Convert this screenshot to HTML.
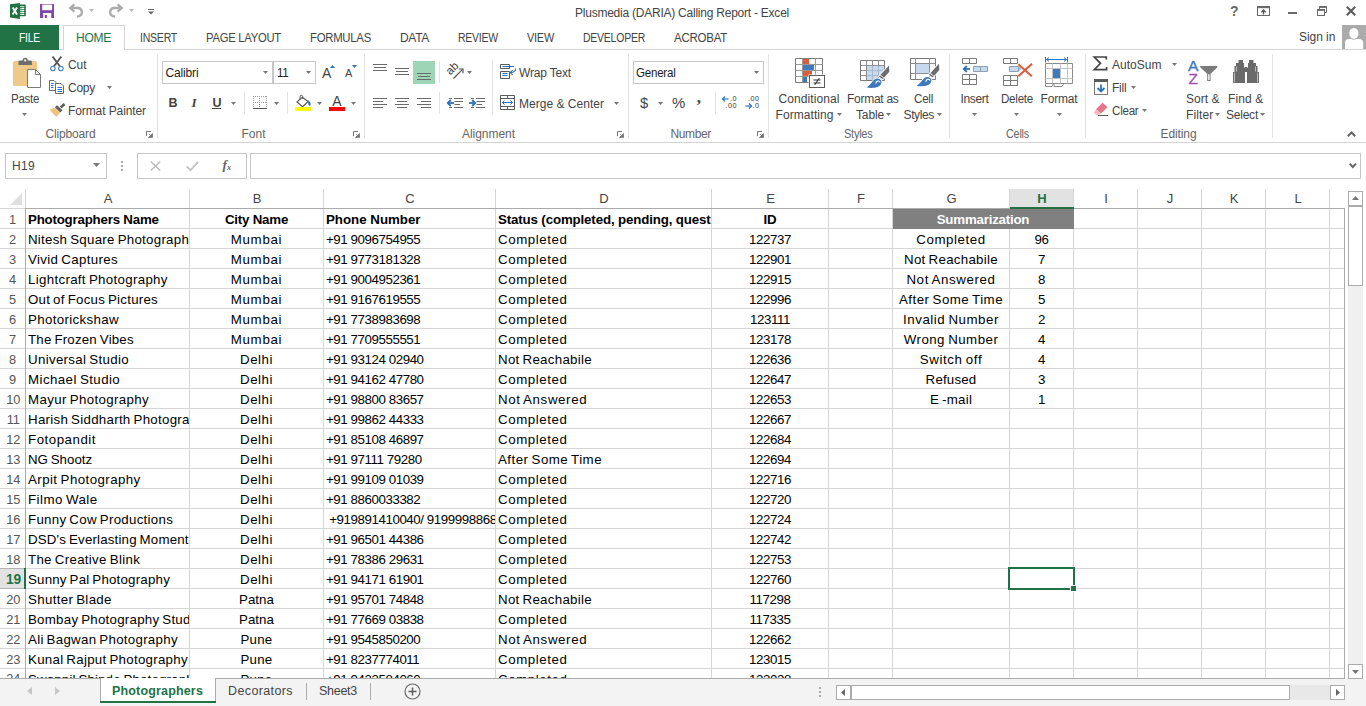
<!DOCTYPE html>
<html lang="en"><head><meta charset="utf-8"><title>Plusmedia (DARIA) Calling Report - Excel</title>
<style>
html,body{margin:0;padding:0;}
body{width:1366px;height:706px;position:relative;overflow:hidden;background:#fff;font-family:"Liberation Sans",sans-serif;color:#444;}
.t{position:absolute;white-space:pre;}
.a{position:absolute;}
.hl{position:absolute;height:1px;}
.vl{position:absolute;width:1px;}
svg{position:absolute;overflow:visible;}
.clip{position:absolute;overflow:hidden;}
.clip .t{top:0;}

</style></head>
<body>
<!-- title bar -->
<svg style="left:10px;top:2px" width="17" height="18" viewBox="0 0 17 18">
<path d="M9 2.500h5.800a1 1 0 0 1 1 1v9.800a1 1 0 0 1 -1 1H9z" fill="#217346"/>
<path d="M11.200 4.200h3v1.100h-3zM11.200 6.100h3v1.100h-3zM11.200 8.100h3v1.100h-3zM11.200 10.100h3v1.100h-3zM11.200 12h3v1.100h-3z" fill="#fff"/>
<path d="M10 4.200h0.700v1.100H10zM10 6.100h0.700v1.100H10zM10 8.100h0.700v1.100H10zM10 10.100h0.700v1.100H10zM10 12h0.700v1.100H10z" fill="#fff"/>
<path d="M0 2.200L9.900 0.900v16L0 15.600z" fill="#217346"/>
<path d="M2.700 5.600l4.300 7M7 5.600l-4.300 7" stroke="#fff" stroke-width="1.900" fill="none"/>
</svg>
<svg style="left:40px;top:4px" width="14" height="14" viewBox="0 0 14 14">
<path d="M0 0h14v14H0z" fill="#8348a6"/>
<rect x="2.200" y="0.600" width="9.900" height="5.600" fill="#fff"/>
<rect x="3.200" y="9" width="8" height="5" fill="#fff"/>
<rect x="4.800" y="11" width="2.100" height="3" fill="#8348a6"/>
</svg>
<svg style="left:68px;top:3px" width="16" height="15" viewBox="0 0 16 15">
<path d="M2.500 5H10a4.200 4.200 0 0 1 0.500 8.300l-1.500 0.200" stroke="#ababab" stroke-width="2.300" fill="none"/>
<path d="M6.300 1.300L2.300 5l4 3.700" stroke="#ababab" stroke-width="2.300" fill="none"/>
</svg>
<svg style="left:89px;top:9px" width="5" height="3" viewBox="0 0 5 3"><path d="M0 0h5L2.500 3z" fill="#b8b8b8"/></svg>
<svg style="left:108px;top:3px" width="16" height="15" viewBox="0 0 16 15">
<path d="M13.500 5H6a4.200 4.200 0 0 0 -0.500 8.300l1.500 0.200" stroke="#ababab" stroke-width="2.300" fill="none"/>
<path d="M9.700 1.300L13.700 5l-4 3.700" stroke="#ababab" stroke-width="2.300" fill="none"/>
</svg>
<svg style="left:129px;top:9px" width="5" height="3" viewBox="0 0 5 3"><path d="M0 0h5L2.500 3z" fill="#b8b8b8"/></svg>
<svg style="left:148px;top:9px" width="6" height="6" viewBox="0 0 6 6"><path d="M0 0.500h6" stroke="#666" stroke-width="1"/><path d="M0 2.500h6L3 5.500z" fill="#666"/></svg>
<span class="t" style="top:5px;font-size:12px;line-height:16px;color:#444;letter-spacing:-0.235px;left:682px;transform:translateX(-50%);">Plusmedia (DARIA) Calling Report - Excel</span>
<span class="t" style="top:2.4px;font-size:14px;line-height:18px;color:#666;font-weight:700;left:1234.3px;transform:translateX(-50%);">?</span>
<svg style="left:1257px;top:6px" width="13" height="10" viewBox="0 0 13 10">
<rect x="0.500" y="0.500" width="12" height="9" fill="none" stroke="#6a6a6a"/><path d="M0 1.500h13" stroke="#6a6a6a" stroke-width="1.400"/>
<path d="M6.500 4v4.500M4.300 6.200L6.500 4l2.200 2.200" stroke="#555" stroke-width="1.300" fill="none"/></svg>
<div class="a" style="left:1288px;top:12px;width:9px;height:2px;background:#6a6a6a"></div>
<svg style="left:1317px;top:6px" width="11" height="10" viewBox="0 0 11 10">
<path d="M2.500 3V0.500h7v6H8" fill="none" stroke="#6a6a6a"/><path d="M2 1.200h8" stroke="#6a6a6a" stroke-width="1.400"/>
<rect x="0.500" y="3.500" width="7" height="6" fill="none" stroke="#6a6a6a"/><path d="M0 4.200h8" stroke="#6a6a6a" stroke-width="1.400"/></svg>
<svg style="left:1346px;top:6px" width="10" height="10" viewBox="0 0 10 10"><path d="M0.800 0.800l8.400 8.400M9.200 0.800l-8.400 8.400" stroke="#5e5e5e" stroke-width="2.200" fill="none"/></svg>
<!-- ribbon tabs -->
<div class="hl" style="left:0;top:49px;width:1366px;background:#d4d4d4"></div>
<div class="a" style="left:0;top:25px;width:59px;height:25px;background:#217346"></div>
<div class="a" style="left:63px;top:25px;width:60px;height:24px;background:#fff;border:1px solid #d4d4d4;border-bottom:none;box-sizing:content-box"></div>
<span class="t" style="top:29.5px;font-size:12px;line-height:16px;color:#fff;letter-spacing:-0.250px;left:19px;transform:scaleX(0.8626);transform-origin:0 50%;">FILE</span>
<span class="t" style="top:29.5px;font-size:12px;line-height:16px;color:#217346;letter-spacing:-0.250px;left:76px;">HOME</span>
<span class="t" style="top:29.5px;font-size:12px;line-height:16px;color:#444;letter-spacing:-0.250px;left:140px;transform:scaleX(0.8748);transform-origin:0 50%;">INSERT</span>
<span class="t" style="top:29.5px;font-size:12px;line-height:16px;color:#444;letter-spacing:-0.250px;left:206px;transform:scaleX(0.9355);transform-origin:0 50%;">PAGE LAYOUT</span>
<span class="t" style="top:29.5px;font-size:12px;line-height:16px;color:#444;letter-spacing:-0.250px;left:310px;transform:scaleX(0.9430);transform-origin:0 50%;">FORMULAS</span>
<span class="t" style="top:29.5px;font-size:12px;line-height:16px;color:#444;letter-spacing:-0.309px;left:400px;">DATA</span>
<span class="t" style="top:29.5px;font-size:12px;line-height:16px;color:#444;letter-spacing:-0.250px;left:458px;transform:scaleX(0.8725);transform-origin:0 50%;">REVIEW</span>
<span class="t" style="top:29.5px;font-size:12px;line-height:16px;color:#444;letter-spacing:-0.250px;left:527px;transform:scaleX(0.9100);transform-origin:0 50%;">VIEW</span>
<span class="t" style="top:29.5px;font-size:12px;line-height:16px;color:#444;letter-spacing:-0.250px;left:583px;transform:scaleX(0.8719);transform-origin:0 50%;">DEVELOPER</span>
<span class="t" style="top:29.5px;font-size:12px;line-height:16px;color:#444;letter-spacing:-0.250px;left:674px;transform:scaleX(0.9571);transform-origin:0 50%;">ACROBAT</span>
<span class="t" style="top:28.7px;font-size:12px;line-height:16px;color:#444;letter-spacing:-0.058px;left:1299px;">Sign in</span>
<svg style="left:1342px;top:25px" width="24" height="24" viewBox="0 0 24 24"><rect width="24" height="24" fill="#ababab"/>
<path d="M3 24v-6a4 4 0 0 1 4-4h10.200a4 4 0 0 1 4 4v6z" fill="#fff"/><ellipse cx="11.900" cy="8.500" rx="5.400" ry="6.200" fill="#ababab"/><ellipse cx="11.900" cy="8.400" rx="4.600" ry="5.400" fill="#fff"/></svg>
<!-- formula bar -->
<div class="hl" style="left:0;top:142px;width:1366px;background:#d4d4d4"></div>
<div class="a" style="left:5px;top:153px;width:100px;height:24px;border:1px solid #c6c6c6"></div>
<span class="t" style="top:158px;font-size:12px;line-height:16px;color:#444;letter-spacing:0.328px;left:12px;">H19</span>
<svg style="left:93px;top:163px" width="7" height="4" viewBox="0 0 7 4"><path d="M0 0h7L3.5 4z" fill="#777"/></svg>
<div class="a" style="left:121px;top:161px;width:2px;height:2px;background:#aaa"></div><div class="a" style="left:121px;top:165px;width:2px;height:2px;background:#aaa"></div><div class="a" style="left:121px;top:169px;width:2px;height:2px;background:#aaa"></div>
<div class="a" style="left:137px;top:153px;width:108px;height:24px;border:1px solid #c6c6c6"></div>
<svg style="left:150px;top:161px" width="11" height="10" viewBox="0 0 11 10"><path d="M0.8 0.5l9.4 9M10.2 0.5l-9.4 9" stroke="#b8b8b8" stroke-width="1.3" fill="none"/></svg>
<svg style="left:186px;top:161px" width="13" height="10" viewBox="0 0 13 10"><path d="M0.8 5.5l3.7 3.7L12.2 0.8" stroke="#c4c4c4" stroke-width="1.8" fill="none"/></svg>
<span class="t" style="top:156.25px;font-size:13.5px;line-height:17.5px;color:#666;font-weight:700;left:222.5px;font-family:'Liberation Serif',serif;font-style:italic;">f</span>
<span class="t" style="top:161.25px;font-size:8.5px;line-height:12.5px;color:#666;font-weight:700;left:227px;font-family:'Liberation Serif',serif;font-style:italic;">x</span>
<div class="a" style="left:250px;top:153px;width:1109px;height:24px;border:1px solid #c6c6c6"></div>
<svg style="left:1348.5px;top:162.5px" width="8" height="6" viewBox="0 0 8 6"><path d="M0.700 0.800L3.800 4L6.900 0.800" stroke="#666" stroke-width="2" fill="none"/></svg>
<!-- ribbon -->
<svg style="left:12px;top:57px" width="30" height="32" viewBox="0 0 30 32"><rect x="1" y="4" width="24" height="25" rx="1.500" fill="#efc987"/>
<path d="M6.500 8V4.500a1 1 0 0 1 1-1h3a2.700 2.700 0 0 1 5.400 0h3a1 1 0 0 1 1 1V8z" fill="#6d6d6d"/><circle cx="13.200" cy="3.400" r="1.100" fill="#fff"/>
<path d="M15.500 12.500h8l5 5v13h-13z" fill="#fff" stroke="#7a7a7a"/><path d="M23.500 12.500v5h5" fill="none" stroke="#7a7a7a"/></svg>
<span class="t" style="top:91px;font-size:12px;line-height:16px;color:#444;letter-spacing:-0.250px;left:11px;transform:scaleX(0.9512);transform-origin:0 50%;">Paste</span>
<svg style="left:22px;top:113px" width="5" height="3" viewBox="0 0 5 3"><path d="M0 0h5L2.5 3z" fill="#777"/></svg>
<svg style="left:50px;top:56px" width="15" height="16" viewBox="0 0 15 16"><path d="M2.500 0.500l7.300 9.800M11.300 0.500l-7.300 9.800" stroke="#555" stroke-width="1.900" fill="none"/>
<circle cx="2.900" cy="12.500" r="2.200" fill="#fff" stroke="#3b7dc4" stroke-width="1.100"/><circle cx="10.900" cy="12.500" r="2.200" fill="#fff" stroke="#3b7dc4" stroke-width="1.100"/></svg>
<span class="t" style="top:57px;font-size:12px;line-height:16px;color:#444;letter-spacing:-0.062px;left:68px;">Cut</span>
<svg style="left:49px;top:80px" width="16" height="15" viewBox="0 0 16 15"><path d="M0.500 0.500h4.500l2 2v8h-6.500z" fill="#fff" stroke="#6a6a6a"/><path d="M2 3.500h2.500M2 5.500h2.500M2 7.500h2.500" stroke="#2f71b8"/>
<path d="M6.500 3.500h5.500l2.500 2.500v7.500h-8z" fill="#fff" stroke="#6a6a6a"/><path d="M8.500 7.500h4.500M8.500 9.500h4.500M8.500 11.500h4.500" stroke="#2f71b8"/></svg>
<span class="t" style="top:80px;font-size:12px;line-height:16px;color:#444;letter-spacing:-0.254px;left:68px;">Copy</span>
<svg style="left:106.5px;top:86px" width="5" height="3" viewBox="0 0 5 3"><path d="M0 0h5L2.5 3z" fill="#777"/></svg>
<svg style="left:49px;top:102px" width="17" height="16" viewBox="0 0 17 16"><path d="M0.600 8L5.600 5.500l5.400 5L7.400 15z" fill="#f0c27b"/>
<path d="M5.900 5.200l2.100-2 5.500 5-2.200 2.200z" fill="#5e5e5e"/><path d="M10.800 4.600l3.800-3.600 1.800 2-3.900 3.500z" fill="#5e5e5e"/></svg>
<span class="t" style="top:103px;font-size:12px;line-height:16px;color:#444;letter-spacing:-0.097px;left:68px;">Format Painter</span>
<span class="t" style="top:126px;font-size:12px;line-height:16px;color:#666;letter-spacing:-0.153px;left:45.5px;">Clipboard</span>
<svg style="left:146px;top:131px" width="7" height="7" viewBox="0 0 7 7"><path d="M0.5 5V0.5H5" fill="none" stroke="#777"/><path d="M6.5 2.5v4h-4zM6 6L3 3" fill="#777" stroke="#777" stroke-width="0.8"/></svg>
<div class="vl" style="left:157px;top:54px;height:84px;background:#e2e2e2"></div>
<div class="a" style="left:162px;top:61px;width:109px;height:21px;border:1px solid #c6c6c6;background:#fff"></div>
<div class="a" style="left:273px;top:61px;width:41px;height:21px;border:1px solid #c6c6c6;background:#fff"></div>
<span class="t" style="top:64.5px;font-size:12px;line-height:16px;color:#222;letter-spacing:-0.145px;left:165.5px;">Calibri</span>
<svg style="left:263px;top:71px" width="5" height="3" viewBox="0 0 5 3"><path d="M0 0h5L2.5 3z" fill="#777"/></svg>
<span class="t" style="top:64.5px;font-size:12px;line-height:16px;color:#222;letter-spacing:-0.250px;left:277px;transform:scaleX(0.9608);transform-origin:0 50%;">11</span>
<svg style="left:306px;top:71px" width="5" height="3" viewBox="0 0 5 3"><path d="M0 0h5L2.5 3z" fill="#777"/></svg>
<span class="t" style="top:63.5px;font-size:14px;line-height:18px;color:#444;left:322px;">A</span>
<svg style="left:330px;top:64.5px" width="5" height="3" viewBox="0 0 5 3"><path d="M0 3h5L2.500 0z" fill="#2f71b8"/></svg>
<span class="t" style="top:66.2px;font-size:11px;line-height:15px;color:#444;left:345px;">A</span>
<svg style="left:352px;top:65px" width="5" height="3" viewBox="0 0 5 3"><path d="M0 0h5L2.500 3z" fill="#2f71b8"/></svg>
<span class="t" style="top:94.95px;font-size:12.5px;line-height:16.5px;color:#444;font-weight:700;left:168.5px;">B</span>
<span class="t" style="top:93.7px;font-size:13px;line-height:17px;color:#444;font-weight:700;left:191.5px;font-family:'Liberation Serif',serif;font-style:italic;">I</span>
<span class="t" style="top:94.95px;font-size:12.5px;line-height:16.5px;color:#444;font-weight:700;left:212.5px;">U</span>
<div class="hl" style="left:212px;top:108px;width:9px;background:#444"></div>
<svg style="left:231px;top:102px" width="5" height="3" viewBox="0 0 5 3"><path d="M0 0h5L2.5 3z" fill="#777"/></svg>
<div class="vl" style="left:244px;top:92px;height:22px;background:#e2e2e2"></div>
<svg style="left:252px;top:95px" width="15" height="14" viewBox="0 0 15 14"><g shape-rendering="crispEdges"><path d="M1 1.500h14M1 7.500h14M1.500 1v12M7.500 1v12M14.500 1v12" fill="none" stroke="#9a9a9a" stroke-dasharray="1 1"/><path d="M1 13.500h14" stroke="#555"/></g></svg>
<svg style="left:274px;top:102px" width="5" height="3" viewBox="0 0 5 3"><path d="M0 0h5L2.5 3z" fill="#777"/></svg>
<div class="vl" style="left:287px;top:92px;height:22px;background:#e2e2e2"></div>
<svg style="left:295px;top:94px" width="17" height="17" viewBox="0 0 17 17"><path d="M7.300 3.200l5.800 4.300-5.500 5.200-5.600-4.700z" fill="#fff" stroke="#555" stroke-width="1.100"/><path d="M5 5.800V2.600a1.300 1.300 0 0 1 2.600 0v2.200" fill="none" stroke="#555"/>
<path d="M13.300 6c1.800 1.800 3.200 4 2 5.400-1.200 1-2.600-.4-2-5.400z" fill="#2f71b8"/><rect x="0" y="13" width="16" height="4" fill="#ffff00"/></svg>
<svg style="left:317px;top:102px" width="5" height="3" viewBox="0 0 5 3"><path d="M0 0h5L2.5 3z" fill="#777"/></svg>
<span class="t" style="top:92.3px;font-size:14px;line-height:18px;color:#444;left:332.3px;">A</span>
<div class="a" style="left:329px;top:107px;width:16px;height:4px;background:#ff0000"></div>
<svg style="left:351px;top:102px" width="5" height="3" viewBox="0 0 5 3"><path d="M0 0h5L2.5 3z" fill="#777"/></svg>
<span class="t" style="top:126px;font-size:12px;line-height:16px;color:#666;letter-spacing:-0.004px;left:241.5px;">Font</span>
<svg style="left:353px;top:131px" width="7" height="7" viewBox="0 0 7 7"><path d="M0.5 5V0.5H5" fill="none" stroke="#777"/><path d="M6.5 2.5v4h-4zM6 6L3 3" fill="#777" stroke="#777" stroke-width="0.8"/></svg>
<div class="vl" style="left:364px;top:54px;height:84px;background:#e2e2e2"></div>
<div class="a" style="left:413px;top:61px;width:22px;height:23px;background:#9fd5b7"></div>
<div class="hl" style="left:373px;top:64px;width:14px;background:#6a6a6a"></div><div class="hl" style="left:374px;top:67px;width:12px;background:#6a6a6a"></div><div class="hl" style="left:373px;top:70px;width:14px;background:#6a6a6a"></div>
<div class="hl" style="left:395px;top:68px;width:14px;background:#6a6a6a"></div><div class="hl" style="left:396px;top:71px;width:12px;background:#6a6a6a"></div><div class="hl" style="left:395px;top:74px;width:14px;background:#6a6a6a"></div>
<div class="hl" style="left:417px;top:73px;width:14px;background:#6a6a6a"></div><div class="hl" style="left:418px;top:76px;width:12px;background:#6a6a6a"></div><div class="hl" style="left:417px;top:79px;width:14px;background:#6a6a6a"></div>
<div class="vl" style="left:439px;top:61px;height:22px;background:#e2e2e2"></div>
<div class="vl" style="left:439px;top:92px;height:22px;background:#e2e2e2"></div>
<svg style="left:446px;top:63px" width="18" height="17" viewBox="0 0 18 17"><path d="M7.500 15.500L16.800 6.200" stroke="#555" stroke-width="1.200"/><path d="M12.800 6h4.200v4.200" fill="none" stroke="#555" stroke-width="1.200"/></svg>
<span class="t" style="top:61.25px;font-size:11.5px;line-height:15.5px;color:#3a3a3a;left:446px;transform:rotate(-45deg);transform-origin:50% 50%;">ab</span>
<svg style="left:467px;top:71px" width="5" height="3" viewBox="0 0 5 3"><path d="M0 0h5L2.5 3z" fill="#777"/></svg>
<div class="vl" style="left:492px;top:60px;height:55px;background:#e2e2e2"></div>
<svg style="left:500px;top:63px" width="17" height="17" viewBox="0 0 17 17"><path d="M0.500 1.500h9v4h-9zM0.500 8.500h9v7h-9z" fill="#fff" stroke="#5b5b5b"/>
<path d="M2.500 3.500h11.500M2.500 10.500h5M2.500 12.500h5" stroke="#2f71b8"/>
<path d="M15.500 5.500c0.300 2.500-1.500 4-4.800 4" fill="none" stroke="#2f71b8" stroke-width="1.100"/><path d="M12.700 7.200l-2.600 2.300 2.600 2.300" fill="none" stroke="#2f71b8" stroke-width="1.100"/></svg>
<span class="t" style="top:64.5px;font-size:12px;line-height:16px;color:#444;letter-spacing:-0.175px;left:519px;">Wrap Text</span>
<div class="hl" style="left:373px;top:98px;width:14px;background:#6a6a6a"></div><div class="hl" style="left:373px;top:101px;width:10px;background:#6a6a6a"></div><div class="hl" style="left:373px;top:104px;width:14px;background:#6a6a6a"></div><div class="hl" style="left:373px;top:107px;width:10px;background:#6a6a6a"></div>
<div class="hl" style="left:395px;top:98px;width:14px;background:#6a6a6a"></div><div class="hl" style="left:397px;top:101px;width:10px;background:#6a6a6a"></div><div class="hl" style="left:395px;top:104px;width:14px;background:#6a6a6a"></div><div class="hl" style="left:397px;top:107px;width:10px;background:#6a6a6a"></div>
<div class="hl" style="left:417px;top:98px;width:14px;background:#6a6a6a"></div><div class="hl" style="left:421px;top:101px;width:10px;background:#6a6a6a"></div><div class="hl" style="left:417px;top:104px;width:14px;background:#6a6a6a"></div><div class="hl" style="left:421px;top:107px;width:10px;background:#6a6a6a"></div>
<svg style="left:447px;top:97px" width="17" height="12" viewBox="0 0 17 12"><path d="M2 1.500h3M7 1.500h9M7.500 4.500h8.500M7.500 7.500h5.500M2 10.500h3M7 10.500h9" stroke="#6a6a6a"/><path d="M1 6h6" stroke="#2f71b8" stroke-width="1.800"/><path d="M3.800 3L0.800 6l3 3" fill="none" stroke="#2f71b8" stroke-width="1.800"/></svg>
<svg style="left:469px;top:97px" width="17" height="12" viewBox="0 0 17 12"><path d="M2 1.500h3M7 1.500h9M7.500 4.500h8.500M7.500 7.500h5.500M2 10.500h3M7 10.500h9" stroke="#6a6a6a"/><path d="M0 6h6" stroke="#2f71b8" stroke-width="1.800"/><path d="M3.200 3l3 3-3 3" fill="none" stroke="#2f71b8" stroke-width="1.800"/></svg>
<svg style="left:500px;top:95px" width="16" height="15" viewBox="0 0 16 15"><path d="M0.500 0.500h14v14h-14zM0.500 3.500h14M0.500 11.500h14M7.500 0.500v3M7.500 11.500v3" fill="none" stroke="#5b5b5b"/>
<path d="M2.500 7.500h10" stroke="#2f71b8"/><path d="M4.500 5.500l-2 2 2 2M10.500 5.500l2 2-2 2" fill="none" stroke="#2f71b8"/></svg>
<span class="t" style="top:95.5px;font-size:12px;line-height:16px;color:#444;letter-spacing:0.021px;left:519px;">Merge &amp; Center</span>
<svg style="left:614px;top:102px" width="5" height="3" viewBox="0 0 5 3"><path d="M0 0h5L2.5 3z" fill="#777"/></svg>
<span class="t" style="top:126px;font-size:12px;line-height:16px;color:#666;letter-spacing:-0.042px;left:462px;">Alignment</span>
<svg style="left:617px;top:131px" width="7" height="7" viewBox="0 0 7 7"><path d="M0.5 5V0.5H5" fill="none" stroke="#777"/><path d="M6.5 2.5v4h-4zM6 6L3 3" fill="#777" stroke="#777" stroke-width="0.8"/></svg>
<div class="vl" style="left:628px;top:54px;height:84px;background:#e2e2e2"></div>
<div class="a" style="left:633px;top:61px;width:129px;height:21px;border:1px solid #c6c6c6;background:#fff"></div>
<span class="t" style="top:64.5px;font-size:12px;line-height:16px;color:#222;letter-spacing:-0.250px;left:636px;transform:scaleX(0.9645);transform-origin:0 50%;">General</span>
<svg style="left:753.5px;top:71px" width="5" height="3" viewBox="0 0 5 3"><path d="M0 0h5L2.5 3z" fill="#777"/></svg>
<span class="t" style="top:93.35px;font-size:15.5px;line-height:19.5px;color:#444;letter-spacing:-0.250px;left:640.2px;transform:scaleX(0.9552);transform-origin:0 50%;">$</span>
<svg style="left:658px;top:102px" width="5" height="3" viewBox="0 0 5 3"><path d="M0 0h5L2.5 3z" fill="#777"/></svg>
<span class="t" style="top:93.35px;font-size:15.5px;line-height:19.5px;color:#444;letter-spacing:-0.250px;left:672px;transform:scaleX(0.9596);transform-origin:0 50%;">%</span>
<span class="t" style="top:87px;font-size:17px;line-height:21px;color:#444;font-weight:700;left:696.8px;font-family:'Liberation Serif',serif;">,</span>
<div class="vl" style="left:715px;top:92px;height:22px;background:#e2e2e2"></div>
<svg style="left:722px;top:95px" width="16" height="15" viewBox="0 0 16 15"><path d="M0.500 4h6" stroke="#2f71b8" stroke-width="1.200"/><path d="M3 1.500L0.500 4 3 6.500" fill="none" stroke="#2f71b8" stroke-width="1.200"/></svg>
<span class="t" style="top:93.4px;font-size:7.2px;line-height:11.2px;color:#333;left:730px;letter-spacing:0.550px;">.0</span>
<span class="t" style="top:99.9px;font-size:7.2px;line-height:11.2px;color:#333;left:725.5px;letter-spacing:0.550px;">.00</span>
<svg style="left:745px;top:95px" width="16" height="15" viewBox="0 0 16 15"><path d="M0.500 11h6" stroke="#2f71b8" stroke-width="1.200"/><path d="M4 8.500l2.500 2.500L4 13.500" fill="none" stroke="#2f71b8" stroke-width="1.200"/></svg>
<span class="t" style="top:93.4px;font-size:7.2px;line-height:11.2px;color:#333;left:748px;letter-spacing:0.550px;">.00</span>
<span class="t" style="top:99.9px;font-size:7.2px;line-height:11.2px;color:#333;left:752.5px;letter-spacing:0.550px;">.0</span>
<span class="t" style="top:126px;font-size:12px;line-height:16px;color:#666;letter-spacing:-0.365px;left:670.5px;">Number</span>
<svg style="left:757px;top:131px" width="7" height="7" viewBox="0 0 7 7"><path d="M0.5 5V0.5H5" fill="none" stroke="#777"/><path d="M6.5 2.5v4h-4zM6 6L3 3" fill="#777" stroke="#777" stroke-width="0.8"/></svg>
<div class="vl" style="left:768px;top:54px;height:84px;background:#e2e2e2"></div>
<svg style="left:795px;top:58px" width="31" height="31" viewBox="0 0 31 31"><path d="M0.500 0.500h27v24h-27z" fill="#fff" stroke="#7a7a7a"/><path d="M0.500 6.500h27M0.500 12.500h27M0.500 18.500h27M7.500 0.500v24M20.500 0.500v24" stroke="#9a9a9a"/>
<rect x="8" y="1" width="6" height="5" fill="#dc5c3b"/><rect x="8" y="7" width="11" height="5" fill="#3e78bd"/><rect x="8" y="13" width="9" height="5" fill="#dc5c3b"/><rect x="8" y="19" width="4" height="5" fill="#3e78bd"/>
<rect x="13.500" y="16.500" width="17" height="14" fill="#fff"/><rect x="14.500" y="17.500" width="15" height="12" fill="#fff" stroke="#5b5b5b"/><path d="M18.500 22h7M18.500 25h7M24.300 20.200l-4.600 6.600" stroke="#333" stroke-width="1.100"/></svg>
<span class="t" style="top:91px;font-size:12px;line-height:16px;color:#444;letter-spacing:0.087px;left:778.5px;">Conditional</span>
<span class="t" style="top:107px;font-size:12px;line-height:16px;color:#444;letter-spacing:0.064px;left:775.5px;">Formatting</span>
<svg style="left:836.5px;top:113px" width="5" height="3" viewBox="0 0 5 3"><path d="M0 0h5L2.5 3z" fill="#777"/></svg>
<svg style="left:859px;top:58px" width="32" height="31" viewBox="0 0 32 31"><path d="M1.500 2.500h24v20h-24z" fill="#fff" stroke="#7a7a7a"/><rect x="8" y="8" width="17" height="14" fill="#c5d9ef"/>
<path d="M1.500 7.500h24M1.500 12.500h24M1.500 17.500h24M7.500 2.500v20M13.500 2.500v20M19.500 2.500v20" stroke="#8f8f8f"/><path d="M8 12.500h17M8 17.500h17M13.500 8v14M19.500 8v14" stroke="#a9b9cc"/>
<g transform="translate(0 0)"><path d="M30 7.500l0.300 6.200-6.600 7.600-3.800-2.900z" fill="#6d6d6d" stroke="#fff" stroke-width="1.600" paint-order="stroke"/><path d="M20.600 16.600l4.200 3.200" stroke="#fff" stroke-width="0.900"/><path d="M18 20.600c-3.500 0.300-5.500 5.500-10.300 9c6 0.800 14.300 0.600 14.800-5.600c0-1.800-2-3.400-4.500-3.400z" fill="#3e78bd" stroke="#fff" stroke-width="1.600" paint-order="stroke"/><path d="M16.900 25.400a2.300 2.300 0 0 1 4.300-1.200" fill="none" stroke="#fff" stroke-width="1.200"/></g></svg>
<span class="t" style="top:91px;font-size:12px;line-height:16px;color:#444;letter-spacing:-0.280px;left:847px;">Format as</span>
<span class="t" style="top:107px;font-size:12px;line-height:16px;color:#444;letter-spacing:-0.138px;left:856px;">Table</span>
<svg style="left:886px;top:113px" width="5" height="3" viewBox="0 0 5 3"><path d="M0 0h5L2.5 3z" fill="#777"/></svg>
<svg style="left:909px;top:58px" width="32" height="31" viewBox="0 0 32 31"><path d="M1.500 0.500h25v21h-25z" fill="#fff" stroke="#7a7a7a"/><path d="M1.500 5.500h25M1.500 15.500h25M6.500 0.500v21M20.500 0.500v21" stroke="#8f8f8f"/><rect x="7" y="6" width="13" height="9" fill="#c5d9ef"/>
<g transform="translate(0 -1.7)"><path d="M30 7.500l0.300 6.200-6.600 7.600-3.800-2.900z" fill="#6d6d6d" stroke="#fff" stroke-width="1.600" paint-order="stroke"/><path d="M20.600 16.600l4.200 3.200" stroke="#fff" stroke-width="0.900"/><path d="M18 20.600c-3.500 0.300-5.500 5.500-10.300 9c6 0.800 14.300 0.600 14.800-5.600c0-1.800-2-3.400-4.500-3.400z" fill="#3e78bd" stroke="#fff" stroke-width="1.600" paint-order="stroke"/><path d="M16.900 25.400a2.300 2.300 0 0 1 4.300-1.200" fill="none" stroke="#fff" stroke-width="1.200"/></g></svg>
<span class="t" style="top:91px;font-size:12px;line-height:16px;color:#444;letter-spacing:-0.250px;left:913.5px;transform:scaleX(0.9658);transform-origin:0 50%;">Cell</span>
<span class="t" style="top:107px;font-size:12px;line-height:16px;color:#444;letter-spacing:-0.365px;left:903.5px;">Styles</span>
<svg style="left:937px;top:113px" width="5" height="3" viewBox="0 0 5 3"><path d="M0 0h5L2.5 3z" fill="#777"/></svg>
<span class="t" style="top:126px;font-size:12px;line-height:16px;color:#666;letter-spacing:-0.250px;left:844px;transform:scaleX(0.9138);transform-origin:0 50%;">Styles</span>
<div class="vl" style="left:949px;top:54px;height:84px;background:#e2e2e2"></div>
<svg style="left:961px;top:58px" width="28" height="28" viewBox="0 0 28 28"><path d="M1.500 0.500h14v5h-14zM8.500 0.500v5" fill="#fff" stroke="#7a7a7a"/><path d="M1.500 16.500h14v10h-14zM8.500 16.500v10M1.500 21.500h14" fill="#fff" stroke="#7a7a7a"/>
<path d="M12.500 8.500h14v5h-14z" fill="#c5d9ef" stroke="#8f9fb3"/><path d="M19.500 8.500v5" stroke="#8f9fb3"/><path d="M2.800 11h6.200" stroke="#2f71b8" stroke-width="1.800"/><path d="M5.800 8L2.800 11l3 3" fill="none" stroke="#2f71b8" stroke-width="1.800"/></svg>
<span class="t" style="top:91px;font-size:12px;line-height:16px;color:#444;letter-spacing:-0.336px;left:960.5px;">Insert</span>
<svg style="left:972px;top:113px" width="5" height="3" viewBox="0 0 5 3"><path d="M0 0h5L2.5 3z" fill="#777"/></svg>
<svg style="left:1002px;top:58px" width="31" height="28" viewBox="0 0 31 28"><path d="M1.500 0.500h14v5h-14zM8.500 0.500v5" fill="#fff" stroke="#7a7a7a"/><path d="M1.500 17.500h14v10h-14zM8.500 17.500v10M1.500 22.500h14" fill="#fff" stroke="#7a7a7a"/>
<path d="M7.500 8.500h9v5h-9z" fill="#c5d9ef" stroke="#8f9fb3"/><path d="M17 8.500l2.500 2.500-2.500 2.500z" fill="#a9c4e4"/><path d="M16.300 6.300l13.500 12M30 5.800L16.300 18.300" stroke="#dc5c3b" stroke-width="2.100" fill="none"/></svg>
<span class="t" style="top:91px;font-size:12px;line-height:16px;color:#444;letter-spacing:-0.250px;left:1000.5px;transform:scaleX(0.9642);transform-origin:0 50%;">Delete</span>
<svg style="left:1014px;top:113px" width="5" height="3" viewBox="0 0 5 3"><path d="M0 0h5L2.5 3z" fill="#777"/></svg>
<svg style="left:1044px;top:56px" width="30" height="32" viewBox="0 0 30 32"><path d="M1.500 1v5.500M23.500 1v5.500M2.500 3.500h20" stroke="#2f71b8"/><path d="M5 1.500L2.500 3.500l2.500 2M20 1.500l2.500 2-2.500 2" fill="none" stroke="#2f71b8"/>
<path d="M1.500 27.500v3h6.500l1.500-3M10 27.500v3h8l2-3" fill="#fff" stroke="#8a8a8a"/>
<path d="M1.500 7.500h27v20h-27z" fill="#fff" stroke="#8a8a8a"/><path d="M1.500 12.500h27M1.500 22.500h27M8.500 7.500v20M16.500 7.500v20M23.500 7.500v20" stroke="#c4c4c4"/><rect x="9" y="13" width="7" height="9" fill="#3e78bd"/></svg>
<span class="t" style="top:91px;font-size:12px;line-height:16px;color:#444;letter-spacing:-0.169px;left:1040.5px;">Format</span>
<svg style="left:1057px;top:113px" width="5" height="3" viewBox="0 0 5 3"><path d="M0 0h5L2.5 3z" fill="#777"/></svg>
<span class="t" style="top:126px;font-size:12px;line-height:16px;color:#666;letter-spacing:-0.250px;left:1005.5px;transform:scaleX(0.9047);transform-origin:0 50%;">Cells</span>
<div class="vl" style="left:1085px;top:54px;height:84px;background:#e2e2e2"></div>
<svg style="left:1093px;top:56px" width="15" height="15" viewBox="0 0 15 15"><path d="M13.300 3.500V1H1.300l6.200 6.300-6.200 6.300h12.300V11" fill="none" stroke="#444" stroke-width="1.700"/></svg>
<span class="t" style="top:57px;font-size:12px;line-height:16px;color:#444;letter-spacing:0.020px;left:1112px;">AutoSum</span>
<svg style="left:1172px;top:63px" width="5" height="3" viewBox="0 0 5 3"><path d="M0 0h5L2.5 3z" fill="#777"/></svg>
<svg style="left:1094px;top:79px" width="15" height="16" viewBox="0 0 15 16"><rect x="0.500" y="2.500" width="13" height="13" fill="#fff" stroke="#7a7a7a"/><rect x="0" y="0" width="14" height="3" fill="#5b5b5b"/>
<path d="M7 5.500v7" stroke="#2f71b8" stroke-width="1.800"/><path d="M3.500 9L7 12.500 10.500 9" fill="none" stroke="#2f71b8" stroke-width="1.800"/></svg>
<span class="t" style="top:80px;font-size:12px;line-height:16px;color:#444;letter-spacing:-0.207px;left:1112px;">Fill</span>
<svg style="left:1130.5px;top:86px" width="5" height="3" viewBox="0 0 5 3"><path d="M0 0h5L2.5 3z" fill="#777"/></svg>
<svg style="left:1093px;top:102px" width="16" height="15" viewBox="0 0 16 15"><path d="M9.500 0.800l5 4.200-6.500 6.500-5-4.200z" fill="#e8748a"/><path d="M3 7.300l5 4.200-1.800 1.300H3L0.800 10.500z" fill="#f4b6c1"/><path d="M5 13.500h10" stroke="#5b5b5b"/></svg>
<span class="t" style="top:103px;font-size:12px;line-height:16px;color:#444;letter-spacing:-0.250px;left:1112px;transform:scaleX(0.9658);transform-origin:0 50%;">Clear</span>
<svg style="left:1142px;top:109px" width="5" height="3" viewBox="0 0 5 3"><path d="M0 0h5L2.5 3z" fill="#777"/></svg>
<span class="t" style="top:55.55px;font-size:15.5px;line-height:19.5px;color:#3e78bd;left:1188px;-webkit-text-stroke:0.350px #3e78bd;">A</span>
<span class="t" style="top:69.45px;font-size:15.5px;line-height:19.5px;color:#a352b8;left:1188.6px;-webkit-text-stroke:0.350px #a352b8;">Z</span>
<svg style="left:1200px;top:66px" width="18" height="16" viewBox="0 0 18 16"><path d="M0.200 0h17v1.600l-6.600 6.200v7.200h-3.400v-7.200l-6.800-6.200z" fill="#7a7a7a"/><path d="M8.200 8.300h1.400v5.700h-1.400z" fill="#fff"/></svg>
<span class="t" style="top:91px;font-size:12px;line-height:16px;color:#444;letter-spacing:0.023px;left:1186px;">Sort &amp;</span>
<span class="t" style="top:107px;font-size:12px;line-height:16px;color:#444;letter-spacing:0.138px;left:1186px;">Filter</span>
<svg style="left:1215px;top:113px" width="5" height="3" viewBox="0 0 5 3"><path d="M0 0h5L2.5 3z" fill="#777"/></svg>
<svg style="left:1233px;top:60px" width="27" height="24" viewBox="0 0 27 24"><path d="M5.500 0h4.500v3h1v5h1v15H0V12h1.500V6H3V3h2.500zM20.500 0h-4.500v3h-1v5h-1v15H26V12h-1.500V6H23V3h-2.500z" fill="#6a6a6a"/><rect x="11.500" y="7" width="3" height="5" fill="#6a6a6a"/>
<path d="M1.500 12.500v10M24.500 12.500v10M3.500 6.500v5M22.500 6.500v5" stroke="#d0d0d0" stroke-width="0.800"/></svg>
<span class="t" style="top:91px;font-size:12px;line-height:16px;color:#444;letter-spacing:0.135px;left:1228px;">Find &amp;</span>
<span class="t" style="top:107px;font-size:12px;line-height:16px;color:#444;letter-spacing:-0.227px;left:1226px;">Select</span>
<svg style="left:1260px;top:113px" width="5" height="3" viewBox="0 0 5 3"><path d="M0 0h5L2.5 3z" fill="#777"/></svg>
<span class="t" style="top:126px;font-size:12px;line-height:16px;color:#666;letter-spacing:-0.100px;left:1160.5px;">Editing</span>
<div class="vl" style="left:1272px;top:54px;height:84px;background:#e2e2e2"></div>
<svg style="left:1347px;top:130.5px" width="9" height="6" viewBox="0 0 9 6"><path d="M0.800 5.200l3.700-3.700L8.200 5.200" fill="none" stroke="#666" stroke-width="2"/></svg>
<!-- grid -->
<div class="a" style="left:1010px;top:189px;width:64px;height:18px;background:#e2e2e2"></div>
<div class="a" style="left:0;top:569px;width:24px;height:19px;background:#e2e2e2"></div>
<span class="t" style="top:190px;font-size:13px;line-height:17px;color:#444;left:108px;transform:translateX(-50%);">A</span>
<div class="vl" style="left:189px;top:189px;height:19px;background:#d6d6d6"></div>
<span class="t" style="top:190px;font-size:13px;line-height:17px;color:#444;left:257px;transform:translateX(-50%);">B</span>
<div class="vl" style="left:323px;top:189px;height:19px;background:#d6d6d6"></div>
<span class="t" style="top:190px;font-size:13px;line-height:17px;color:#444;left:410px;transform:translateX(-50%);">C</span>
<div class="vl" style="left:495px;top:189px;height:19px;background:#d6d6d6"></div>
<span class="t" style="top:190px;font-size:13px;line-height:17px;color:#444;left:604px;transform:translateX(-50%);">D</span>
<div class="vl" style="left:711px;top:189px;height:19px;background:#d6d6d6"></div>
<span class="t" style="top:190px;font-size:13px;line-height:17px;color:#444;left:770.5px;transform:translateX(-50%);">E</span>
<div class="vl" style="left:828px;top:189px;height:19px;background:#d6d6d6"></div>
<span class="t" style="top:190px;font-size:13px;line-height:17px;color:#444;left:861px;transform:translateX(-50%);">F</span>
<div class="vl" style="left:892px;top:189px;height:19px;background:#d6d6d6"></div>
<span class="t" style="top:190px;font-size:13px;line-height:17px;color:#444;left:951.5px;transform:translateX(-50%);">G</span>
<div class="vl" style="left:1009px;top:189px;height:19px;background:#d6d6d6"></div>
<span class="t" style="top:190px;font-size:13px;line-height:17px;color:#217346;font-weight:700;left:1042px;transform:translateX(-50%);">H</span>
<div class="vl" style="left:1073px;top:189px;height:19px;background:#d6d6d6"></div>
<span class="t" style="top:190px;font-size:13px;line-height:17px;color:#444;left:1106px;transform:translateX(-50%);">I</span>
<div class="vl" style="left:1137px;top:189px;height:19px;background:#d6d6d6"></div>
<span class="t" style="top:190px;font-size:13px;line-height:17px;color:#444;left:1170px;transform:translateX(-50%);">J</span>
<div class="vl" style="left:1201px;top:189px;height:19px;background:#d6d6d6"></div>
<span class="t" style="top:190px;font-size:13px;line-height:17px;color:#444;left:1234px;transform:translateX(-50%);">K</span>
<div class="vl" style="left:1265px;top:189px;height:19px;background:#d6d6d6"></div>
<span class="t" style="top:190px;font-size:13px;line-height:17px;color:#444;left:1298px;transform:translateX(-50%);">L</span>
<div class="vl" style="left:1329px;top:189px;height:19px;background:#d6d6d6"></div>
<svg style="left:10px;top:193px" width="12" height="12" viewBox="0 0 12 12"><path d="M12 0v12H0z" fill="#dfdfdf"/></svg>
<div class="vl" style="left:25px;top:189px;height:19px;background:#d6d6d6"></div>
<div class="hl" style="left:0;top:208px;width:25px;background:#d6d6d6"></div>
<div class="hl" style="left:0;top:228px;width:1344px;background:#d6d6d6"></div>
<div class="hl" style="left:0;top:248px;width:1344px;background:#d6d6d6"></div>
<div class="hl" style="left:0;top:268px;width:1344px;background:#d6d6d6"></div>
<div class="hl" style="left:0;top:288px;width:1344px;background:#d6d6d6"></div>
<div class="hl" style="left:0;top:308px;width:1344px;background:#d6d6d6"></div>
<div class="hl" style="left:0;top:328px;width:1344px;background:#d6d6d6"></div>
<div class="hl" style="left:0;top:348px;width:1344px;background:#d6d6d6"></div>
<div class="hl" style="left:0;top:368px;width:1344px;background:#d6d6d6"></div>
<div class="hl" style="left:0;top:388px;width:1344px;background:#d6d6d6"></div>
<div class="hl" style="left:0;top:408px;width:1344px;background:#d6d6d6"></div>
<div class="hl" style="left:0;top:428px;width:1344px;background:#d6d6d6"></div>
<div class="hl" style="left:0;top:448px;width:1344px;background:#d6d6d6"></div>
<div class="hl" style="left:0;top:468px;width:1344px;background:#d6d6d6"></div>
<div class="hl" style="left:0;top:488px;width:1344px;background:#d6d6d6"></div>
<div class="hl" style="left:0;top:508px;width:1344px;background:#d6d6d6"></div>
<div class="hl" style="left:0;top:528px;width:1344px;background:#d6d6d6"></div>
<div class="hl" style="left:0;top:548px;width:1344px;background:#d6d6d6"></div>
<div class="hl" style="left:0;top:568px;width:1344px;background:#d6d6d6"></div>
<div class="hl" style="left:0;top:588px;width:1344px;background:#d6d6d6"></div>
<div class="hl" style="left:0;top:608px;width:1344px;background:#d6d6d6"></div>
<div class="hl" style="left:0;top:628px;width:1344px;background:#d6d6d6"></div>
<div class="hl" style="left:0;top:648px;width:1344px;background:#d6d6d6"></div>
<div class="hl" style="left:0;top:668px;width:1344px;background:#d6d6d6"></div>
<div class="vl" style="left:189px;top:209px;height:469px;background:#d6d6d6"></div>
<div class="vl" style="left:323px;top:209px;height:469px;background:#d6d6d6"></div>
<div class="vl" style="left:495px;top:209px;height:469px;background:#d6d6d6"></div>
<div class="vl" style="left:711px;top:209px;height:469px;background:#d6d6d6"></div>
<div class="vl" style="left:828px;top:209px;height:469px;background:#d6d6d6"></div>
<div class="vl" style="left:892px;top:209px;height:469px;background:#d6d6d6"></div>
<div class="vl" style="left:1009px;top:209px;height:469px;background:#d6d6d6"></div>
<div class="vl" style="left:1073px;top:209px;height:469px;background:#d6d6d6"></div>
<div class="vl" style="left:1137px;top:209px;height:469px;background:#d6d6d6"></div>
<div class="vl" style="left:1201px;top:209px;height:469px;background:#d6d6d6"></div>
<div class="vl" style="left:1265px;top:209px;height:469px;background:#d6d6d6"></div>
<div class="vl" style="left:1329px;top:209px;height:469px;background:#d6d6d6"></div>
<div class="hl" style="left:25px;top:208px;width:1319px;background:#ababab"></div>
<div class="vl" style="left:25px;top:208px;height:470px;background:#ababab"></div>
<div class="vl" style="left:1344px;top:208px;height:470px;background:#ababab"></div>
<div class="hl" style="left:0;top:568px;width:24px;background:#b4b4b4"></div><div class="hl" style="left:0;top:588px;width:24px;background:#b4b4b4"></div>
<div class="a" style="left:24px;top:568px;width:2px;height:21px;background:#217346"></div>
<div class="a" style="left:1010px;top:207px;width:64px;height:2px;background:#217346"></div>
<div class="a" style="left:893px;top:209px;width:181px;height:20px;background:#808080"></div>
<span class="t" style="top:209.5px;font-size:12.8px;line-height:19px;color:#555;letter-spacing:-0.100px;left:12.5px;transform:translateX(-50%);">1</span>
<div class="clip" style="left:26px;top:209px;width:163px;height:19px"><span class="t" style="top:1px;font-size:13.3px;line-height:19px;color:#000;font-weight:700;letter-spacing:-0.210px;left:2px;">Photographers Name</span></div>
<div class="clip" style="left:190px;top:209px;width:133px;height:19px"><span class="t" style="top:1px;font-size:13.3px;line-height:19px;color:#000;font-weight:700;letter-spacing:-0.210px;left:66.5px;transform:translateX(-50%);">City Name</span></div>
<div class="clip" style="left:324px;top:209px;width:171px;height:19px"><span class="t" style="top:1px;font-size:13.3px;line-height:19px;color:#000;font-weight:700;letter-spacing:-0.007px;left:2px;">Phone Number</span></div>
<div class="clip" style="left:496px;top:209px;width:215px;height:19px"><span class="t" style="top:1px;font-size:13.3px;line-height:19px;color:#000;font-weight:700;letter-spacing:-0.140px;left:2px;">Status (completed, pending, questionable)</span></div>
<div class="clip" style="left:712px;top:209px;width:116px;height:19px"><span class="t" style="top:1px;font-size:13.3px;line-height:19px;color:#000;font-weight:700;letter-spacing:-0.210px;left:58px;transform:translateX(-50%);">ID</span></div>
<span class="t" style="top:229.5px;font-size:12.8px;line-height:19px;color:#555;letter-spacing:-0.100px;left:12.5px;transform:translateX(-50%);">2</span>
<div class="clip" style="left:26px;top:229px;width:163px;height:19px"><span class="t" style="top:1px;font-size:13.3px;line-height:19px;color:#000;letter-spacing:0.265px;left:2px;word-spacing:-1px;">Nitesh Square Photography</span></div>
<div class="clip" style="left:190px;top:229px;width:133px;height:19px"><span class="t" style="top:1px;font-size:13.3px;line-height:19px;color:#000;letter-spacing:0.701px;left:66.5px;transform:translateX(-50%);">Mumbai</span></div>
<div class="clip" style="left:324px;top:229px;width:171px;height:19px"><span class="t" style="top:1px;font-size:13.3px;line-height:19px;color:#000;letter-spacing:-0.420px;left:2px;">+91 9096754955</span></div>
<div class="clip" style="left:496px;top:229px;width:215px;height:19px"><span class="t" style="top:1px;font-size:13.3px;line-height:19px;color:#000;letter-spacing:0.565px;left:2px;">Completed</span></div>
<div class="clip" style="left:712px;top:229px;width:116px;height:19px"><span class="t" style="top:1px;font-size:13.3px;line-height:19px;color:#000;letter-spacing:-0.420px;left:58px;transform:translateX(-50%);">122737</span></div>
<span class="t" style="top:249.5px;font-size:12.8px;line-height:19px;color:#555;letter-spacing:-0.100px;left:12.5px;transform:translateX(-50%);">3</span>
<div class="clip" style="left:26px;top:249px;width:163px;height:19px"><span class="t" style="top:1px;font-size:13.3px;line-height:19px;color:#000;letter-spacing:0.340px;left:2px;word-spacing:-1px;">Vivid Captures</span></div>
<div class="clip" style="left:190px;top:249px;width:133px;height:19px"><span class="t" style="top:1px;font-size:13.3px;line-height:19px;color:#000;letter-spacing:0.701px;left:66.5px;transform:translateX(-50%);">Mumbai</span></div>
<div class="clip" style="left:324px;top:249px;width:171px;height:19px"><span class="t" style="top:1px;font-size:13.3px;line-height:19px;color:#000;letter-spacing:-0.420px;left:2px;">+91 9773181328</span></div>
<div class="clip" style="left:496px;top:249px;width:215px;height:19px"><span class="t" style="top:1px;font-size:13.3px;line-height:19px;color:#000;letter-spacing:0.565px;left:2px;">Completed</span></div>
<div class="clip" style="left:712px;top:249px;width:116px;height:19px"><span class="t" style="top:1px;font-size:13.3px;line-height:19px;color:#000;letter-spacing:-0.420px;left:58px;transform:translateX(-50%);">122901</span></div>
<span class="t" style="top:269.5px;font-size:12.8px;line-height:19px;color:#555;letter-spacing:-0.100px;left:12.5px;transform:translateX(-50%);">4</span>
<div class="clip" style="left:26px;top:269px;width:163px;height:19px"><span class="t" style="top:1px;font-size:13.3px;line-height:19px;color:#000;letter-spacing:0.318px;left:2px;word-spacing:-1px;">Lightcraft Photography</span></div>
<div class="clip" style="left:190px;top:269px;width:133px;height:19px"><span class="t" style="top:1px;font-size:13.3px;line-height:19px;color:#000;letter-spacing:0.701px;left:66.5px;transform:translateX(-50%);">Mumbai</span></div>
<div class="clip" style="left:324px;top:269px;width:171px;height:19px"><span class="t" style="top:1px;font-size:13.3px;line-height:19px;color:#000;letter-spacing:-0.420px;left:2px;">+91 9004952361</span></div>
<div class="clip" style="left:496px;top:269px;width:215px;height:19px"><span class="t" style="top:1px;font-size:13.3px;line-height:19px;color:#000;letter-spacing:0.565px;left:2px;">Completed</span></div>
<div class="clip" style="left:712px;top:269px;width:116px;height:19px"><span class="t" style="top:1px;font-size:13.3px;line-height:19px;color:#000;letter-spacing:-0.420px;left:58px;transform:translateX(-50%);">122915</span></div>
<span class="t" style="top:289.5px;font-size:12.8px;line-height:19px;color:#555;letter-spacing:-0.100px;left:12.5px;transform:translateX(-50%);">5</span>
<div class="clip" style="left:26px;top:289px;width:163px;height:19px"><span class="t" style="top:1px;font-size:13.3px;line-height:19px;color:#000;letter-spacing:0.245px;left:2px;word-spacing:-1px;">Out of Focus Pictures</span></div>
<div class="clip" style="left:190px;top:289px;width:133px;height:19px"><span class="t" style="top:1px;font-size:13.3px;line-height:19px;color:#000;letter-spacing:0.701px;left:66.5px;transform:translateX(-50%);">Mumbai</span></div>
<div class="clip" style="left:324px;top:289px;width:171px;height:19px"><span class="t" style="top:1px;font-size:13.3px;line-height:19px;color:#000;letter-spacing:-0.420px;left:2px;">+91 9167619555</span></div>
<div class="clip" style="left:496px;top:289px;width:215px;height:19px"><span class="t" style="top:1px;font-size:13.3px;line-height:19px;color:#000;letter-spacing:0.565px;left:2px;">Completed</span></div>
<div class="clip" style="left:712px;top:289px;width:116px;height:19px"><span class="t" style="top:1px;font-size:13.3px;line-height:19px;color:#000;letter-spacing:-0.420px;left:58px;transform:translateX(-50%);">122996</span></div>
<span class="t" style="top:309.5px;font-size:12.8px;line-height:19px;color:#555;letter-spacing:-0.100px;left:12.5px;transform:translateX(-50%);">6</span>
<div class="clip" style="left:26px;top:309px;width:163px;height:19px"><span class="t" style="top:1px;font-size:13.3px;line-height:19px;color:#000;letter-spacing:0.349px;left:2px;">Photorickshaw</span></div>
<div class="clip" style="left:190px;top:309px;width:133px;height:19px"><span class="t" style="top:1px;font-size:13.3px;line-height:19px;color:#000;letter-spacing:0.701px;left:66.5px;transform:translateX(-50%);">Mumbai</span></div>
<div class="clip" style="left:324px;top:309px;width:171px;height:19px"><span class="t" style="top:1px;font-size:13.3px;line-height:19px;color:#000;letter-spacing:-0.420px;left:2px;">+91 7738983698</span></div>
<div class="clip" style="left:496px;top:309px;width:215px;height:19px"><span class="t" style="top:1px;font-size:13.3px;line-height:19px;color:#000;letter-spacing:0.565px;left:2px;">Completed</span></div>
<div class="clip" style="left:712px;top:309px;width:116px;height:19px"><span class="t" style="top:1px;font-size:13.3px;line-height:19px;color:#000;letter-spacing:-0.420px;left:58px;transform:translateX(-50%);">123111</span></div>
<span class="t" style="top:329.5px;font-size:12.8px;line-height:19px;color:#555;letter-spacing:-0.100px;left:12.5px;transform:translateX(-50%);">7</span>
<div class="clip" style="left:26px;top:329px;width:163px;height:19px"><span class="t" style="top:1px;font-size:13.3px;line-height:19px;color:#000;letter-spacing:0.193px;left:2px;word-spacing:-1px;">The Frozen Vibes</span></div>
<div class="clip" style="left:190px;top:329px;width:133px;height:19px"><span class="t" style="top:1px;font-size:13.3px;line-height:19px;color:#000;letter-spacing:0.701px;left:66.5px;transform:translateX(-50%);">Mumbai</span></div>
<div class="clip" style="left:324px;top:329px;width:171px;height:19px"><span class="t" style="top:1px;font-size:13.3px;line-height:19px;color:#000;letter-spacing:-0.420px;left:2px;">+91 7709555551</span></div>
<div class="clip" style="left:496px;top:329px;width:215px;height:19px"><span class="t" style="top:1px;font-size:13.3px;line-height:19px;color:#000;letter-spacing:0.565px;left:2px;">Completed</span></div>
<div class="clip" style="left:712px;top:329px;width:116px;height:19px"><span class="t" style="top:1px;font-size:13.3px;line-height:19px;color:#000;letter-spacing:-0.420px;left:58px;transform:translateX(-50%);">123178</span></div>
<span class="t" style="top:349.5px;font-size:12.8px;line-height:19px;color:#555;letter-spacing:-0.100px;left:12.5px;transform:translateX(-50%);">8</span>
<div class="clip" style="left:26px;top:349px;width:163px;height:19px"><span class="t" style="top:1px;font-size:13.3px;line-height:19px;color:#000;letter-spacing:0.323px;left:2px;word-spacing:-1px;">Universal Studio</span></div>
<div class="clip" style="left:190px;top:349px;width:133px;height:19px"><span class="t" style="top:1px;font-size:13.3px;line-height:19px;color:#000;letter-spacing:0.537px;left:66.5px;transform:translateX(-50%);">Delhi</span></div>
<div class="clip" style="left:324px;top:349px;width:171px;height:19px"><span class="t" style="top:1px;font-size:13.3px;line-height:19px;color:#000;letter-spacing:-0.420px;left:2px;">+91 93124 02940</span></div>
<div class="clip" style="left:496px;top:349px;width:215px;height:19px"><span class="t" style="top:1px;font-size:13.3px;line-height:19px;color:#000;letter-spacing:0.284px;left:2px;word-spacing:-1px;">Not Reachabile</span></div>
<div class="clip" style="left:712px;top:349px;width:116px;height:19px"><span class="t" style="top:1px;font-size:13.3px;line-height:19px;color:#000;letter-spacing:-0.420px;left:58px;transform:translateX(-50%);">122636</span></div>
<span class="t" style="top:369.5px;font-size:12.8px;line-height:19px;color:#555;letter-spacing:-0.100px;left:12.5px;transform:translateX(-50%);">9</span>
<div class="clip" style="left:26px;top:369px;width:163px;height:19px"><span class="t" style="top:1px;font-size:13.3px;line-height:19px;color:#000;letter-spacing:0.427px;left:2px;word-spacing:-1px;">Michael Studio</span></div>
<div class="clip" style="left:190px;top:369px;width:133px;height:19px"><span class="t" style="top:1px;font-size:13.3px;line-height:19px;color:#000;letter-spacing:0.537px;left:66.5px;transform:translateX(-50%);">Delhi</span></div>
<div class="clip" style="left:324px;top:369px;width:171px;height:19px"><span class="t" style="top:1px;font-size:13.3px;line-height:19px;color:#000;letter-spacing:-0.420px;left:2px;">+91 94162 47780</span></div>
<div class="clip" style="left:496px;top:369px;width:215px;height:19px"><span class="t" style="top:1px;font-size:13.3px;line-height:19px;color:#000;letter-spacing:0.565px;left:2px;">Completed</span></div>
<div class="clip" style="left:712px;top:369px;width:116px;height:19px"><span class="t" style="top:1px;font-size:13.3px;line-height:19px;color:#000;letter-spacing:-0.420px;left:58px;transform:translateX(-50%);">122647</span></div>
<span class="t" style="top:389.5px;font-size:12.8px;line-height:19px;color:#555;letter-spacing:-0.100px;left:13.2px;transform:translateX(-50%);">10</span>
<div class="clip" style="left:26px;top:389px;width:163px;height:19px"><span class="t" style="top:1px;font-size:13.3px;line-height:19px;color:#000;letter-spacing:0.344px;left:2px;word-spacing:-1px;">Mayur Photography</span></div>
<div class="clip" style="left:190px;top:389px;width:133px;height:19px"><span class="t" style="top:1px;font-size:13.3px;line-height:19px;color:#000;letter-spacing:0.537px;left:66.5px;transform:translateX(-50%);">Delhi</span></div>
<div class="clip" style="left:324px;top:389px;width:171px;height:19px"><span class="t" style="top:1px;font-size:13.3px;line-height:19px;color:#000;letter-spacing:-0.420px;left:2px;">+91 98800 83657</span></div>
<div class="clip" style="left:496px;top:389px;width:215px;height:19px"><span class="t" style="top:1px;font-size:13.3px;line-height:19px;color:#000;letter-spacing:0.618px;left:2px;word-spacing:-1px;">Not Answered</span></div>
<div class="clip" style="left:712px;top:389px;width:116px;height:19px"><span class="t" style="top:1px;font-size:13.3px;line-height:19px;color:#000;letter-spacing:-0.420px;left:58px;transform:translateX(-50%);">122653</span></div>
<span class="t" style="top:409.5px;font-size:12.8px;line-height:19px;color:#555;letter-spacing:-0.100px;left:13.2px;transform:translateX(-50%);">11</span>
<div class="clip" style="left:26px;top:409px;width:163px;height:19px"><span class="t" style="top:1px;font-size:13.3px;line-height:19px;color:#000;letter-spacing:0.281px;left:2px;word-spacing:-1px;">Harish Siddharth Photography</span></div>
<div class="clip" style="left:190px;top:409px;width:133px;height:19px"><span class="t" style="top:1px;font-size:13.3px;line-height:19px;color:#000;letter-spacing:0.537px;left:66.5px;transform:translateX(-50%);">Delhi</span></div>
<div class="clip" style="left:324px;top:409px;width:171px;height:19px"><span class="t" style="top:1px;font-size:13.3px;line-height:19px;color:#000;letter-spacing:-0.420px;left:2px;">+91 99862 44333</span></div>
<div class="clip" style="left:496px;top:409px;width:215px;height:19px"><span class="t" style="top:1px;font-size:13.3px;line-height:19px;color:#000;letter-spacing:0.565px;left:2px;">Completed</span></div>
<div class="clip" style="left:712px;top:409px;width:116px;height:19px"><span class="t" style="top:1px;font-size:13.3px;line-height:19px;color:#000;letter-spacing:-0.420px;left:58px;transform:translateX(-50%);">122667</span></div>
<span class="t" style="top:429.5px;font-size:12.8px;line-height:19px;color:#555;letter-spacing:-0.100px;left:13.2px;transform:translateX(-50%);">12</span>
<div class="clip" style="left:26px;top:429px;width:163px;height:19px"><span class="t" style="top:1px;font-size:13.3px;line-height:19px;color:#000;letter-spacing:0.516px;left:2px;">Fotopandit</span></div>
<div class="clip" style="left:190px;top:429px;width:133px;height:19px"><span class="t" style="top:1px;font-size:13.3px;line-height:19px;color:#000;letter-spacing:0.537px;left:66.5px;transform:translateX(-50%);">Delhi</span></div>
<div class="clip" style="left:324px;top:429px;width:171px;height:19px"><span class="t" style="top:1px;font-size:13.3px;line-height:19px;color:#000;letter-spacing:-0.420px;left:2px;">+91 85108 46897</span></div>
<div class="clip" style="left:496px;top:429px;width:215px;height:19px"><span class="t" style="top:1px;font-size:13.3px;line-height:19px;color:#000;letter-spacing:0.565px;left:2px;">Completed</span></div>
<div class="clip" style="left:712px;top:429px;width:116px;height:19px"><span class="t" style="top:1px;font-size:13.3px;line-height:19px;color:#000;letter-spacing:-0.420px;left:58px;transform:translateX(-50%);">122684</span></div>
<span class="t" style="top:449.5px;font-size:12.8px;line-height:19px;color:#555;letter-spacing:-0.100px;left:13.2px;transform:translateX(-50%);">13</span>
<div class="clip" style="left:26px;top:449px;width:163px;height:19px"><span class="t" style="top:1px;font-size:13.3px;line-height:19px;color:#000;letter-spacing:0.017px;left:2px;word-spacing:-1px;">NG Shootz</span></div>
<div class="clip" style="left:190px;top:449px;width:133px;height:19px"><span class="t" style="top:1px;font-size:13.3px;line-height:19px;color:#000;letter-spacing:0.537px;left:66.5px;transform:translateX(-50%);">Delhi</span></div>
<div class="clip" style="left:324px;top:449px;width:171px;height:19px"><span class="t" style="top:1px;font-size:13.3px;line-height:19px;color:#000;letter-spacing:-0.420px;left:2px;">+91 97111 79280</span></div>
<div class="clip" style="left:496px;top:449px;width:215px;height:19px"><span class="t" style="top:1px;font-size:13.3px;line-height:19px;color:#000;letter-spacing:0.465px;left:2px;word-spacing:-1px;">After Some Time</span></div>
<div class="clip" style="left:712px;top:449px;width:116px;height:19px"><span class="t" style="top:1px;font-size:13.3px;line-height:19px;color:#000;letter-spacing:-0.420px;left:58px;transform:translateX(-50%);">122694</span></div>
<span class="t" style="top:469.5px;font-size:12.8px;line-height:19px;color:#555;letter-spacing:-0.100px;left:13.2px;transform:translateX(-50%);">14</span>
<div class="clip" style="left:26px;top:469px;width:163px;height:19px"><span class="t" style="top:1px;font-size:13.3px;line-height:19px;color:#000;letter-spacing:0.426px;left:2px;word-spacing:-1px;">Arpit Photography</span></div>
<div class="clip" style="left:190px;top:469px;width:133px;height:19px"><span class="t" style="top:1px;font-size:13.3px;line-height:19px;color:#000;letter-spacing:0.537px;left:66.5px;transform:translateX(-50%);">Delhi</span></div>
<div class="clip" style="left:324px;top:469px;width:171px;height:19px"><span class="t" style="top:1px;font-size:13.3px;line-height:19px;color:#000;letter-spacing:-0.420px;left:2px;">+91 99109 01039</span></div>
<div class="clip" style="left:496px;top:469px;width:215px;height:19px"><span class="t" style="top:1px;font-size:13.3px;line-height:19px;color:#000;letter-spacing:0.565px;left:2px;">Completed</span></div>
<div class="clip" style="left:712px;top:469px;width:116px;height:19px"><span class="t" style="top:1px;font-size:13.3px;line-height:19px;color:#000;letter-spacing:-0.420px;left:58px;transform:translateX(-50%);">122716</span></div>
<span class="t" style="top:489.5px;font-size:12.8px;line-height:19px;color:#555;letter-spacing:-0.100px;left:13.2px;transform:translateX(-50%);">15</span>
<div class="clip" style="left:26px;top:489px;width:163px;height:19px"><span class="t" style="top:1px;font-size:13.3px;line-height:19px;color:#000;letter-spacing:0.460px;left:2px;word-spacing:-1px;">Filmo Wale</span></div>
<div class="clip" style="left:190px;top:489px;width:133px;height:19px"><span class="t" style="top:1px;font-size:13.3px;line-height:19px;color:#000;letter-spacing:0.537px;left:66.5px;transform:translateX(-50%);">Delhi</span></div>
<div class="clip" style="left:324px;top:489px;width:171px;height:19px"><span class="t" style="top:1px;font-size:13.3px;line-height:19px;color:#000;letter-spacing:-0.420px;left:2px;">+91 8860033382</span></div>
<div class="clip" style="left:496px;top:489px;width:215px;height:19px"><span class="t" style="top:1px;font-size:13.3px;line-height:19px;color:#000;letter-spacing:0.565px;left:2px;">Completed</span></div>
<div class="clip" style="left:712px;top:489px;width:116px;height:19px"><span class="t" style="top:1px;font-size:13.3px;line-height:19px;color:#000;letter-spacing:-0.420px;left:58px;transform:translateX(-50%);">122720</span></div>
<span class="t" style="top:509.5px;font-size:12.8px;line-height:19px;color:#555;letter-spacing:-0.100px;left:13.2px;transform:translateX(-50%);">16</span>
<div class="clip" style="left:26px;top:509px;width:163px;height:19px"><span class="t" style="top:1px;font-size:13.3px;line-height:19px;color:#000;letter-spacing:0.282px;left:2px;word-spacing:-1px;">Funny Cow Productions</span></div>
<div class="clip" style="left:190px;top:509px;width:133px;height:19px"><span class="t" style="top:1px;font-size:13.3px;line-height:19px;color:#000;letter-spacing:0.537px;left:66.5px;transform:translateX(-50%);">Delhi</span></div>
<div class="clip" style="left:324px;top:509px;width:171px;height:19px"><span class="t" style="top:1px;font-size:13.3px;line-height:19px;color:#000;letter-spacing:-0.420px;left:2px;"> +919891410040/ 9199998868</span></div>
<div class="clip" style="left:496px;top:509px;width:215px;height:19px"><span class="t" style="top:1px;font-size:13.3px;line-height:19px;color:#000;letter-spacing:0.565px;left:2px;">Completed</span></div>
<div class="clip" style="left:712px;top:509px;width:116px;height:19px"><span class="t" style="top:1px;font-size:13.3px;line-height:19px;color:#000;letter-spacing:-0.420px;left:58px;transform:translateX(-50%);">122724</span></div>
<span class="t" style="top:529.5px;font-size:12.8px;line-height:19px;color:#555;letter-spacing:-0.100px;left:13.2px;transform:translateX(-50%);">17</span>
<div class="clip" style="left:26px;top:529px;width:163px;height:19px"><span class="t" style="top:1px;font-size:13.3px;line-height:19px;color:#000;letter-spacing:0.176px;left:2px;word-spacing:-1px;">DSD&#x27;s Everlasting Moments</span></div>
<div class="clip" style="left:190px;top:529px;width:133px;height:19px"><span class="t" style="top:1px;font-size:13.3px;line-height:19px;color:#000;letter-spacing:0.537px;left:66.5px;transform:translateX(-50%);">Delhi</span></div>
<div class="clip" style="left:324px;top:529px;width:171px;height:19px"><span class="t" style="top:1px;font-size:13.3px;line-height:19px;color:#000;letter-spacing:-0.420px;left:2px;">+91 96501 44386</span></div>
<div class="clip" style="left:496px;top:529px;width:215px;height:19px"><span class="t" style="top:1px;font-size:13.3px;line-height:19px;color:#000;letter-spacing:0.565px;left:2px;">Completed</span></div>
<div class="clip" style="left:712px;top:529px;width:116px;height:19px"><span class="t" style="top:1px;font-size:13.3px;line-height:19px;color:#000;letter-spacing:-0.420px;left:58px;transform:translateX(-50%);">122742</span></div>
<span class="t" style="top:549.5px;font-size:12.8px;line-height:19px;color:#555;letter-spacing:-0.100px;left:13.2px;transform:translateX(-50%);">18</span>
<div class="clip" style="left:26px;top:549px;width:163px;height:19px"><span class="t" style="top:1px;font-size:13.3px;line-height:19px;color:#000;letter-spacing:0.303px;left:2px;word-spacing:-1px;">The Creative Blink</span></div>
<div class="clip" style="left:190px;top:549px;width:133px;height:19px"><span class="t" style="top:1px;font-size:13.3px;line-height:19px;color:#000;letter-spacing:0.537px;left:66.5px;transform:translateX(-50%);">Delhi</span></div>
<div class="clip" style="left:324px;top:549px;width:171px;height:19px"><span class="t" style="top:1px;font-size:13.3px;line-height:19px;color:#000;letter-spacing:-0.420px;left:2px;">+91 78386 29631</span></div>
<div class="clip" style="left:496px;top:549px;width:215px;height:19px"><span class="t" style="top:1px;font-size:13.3px;line-height:19px;color:#000;letter-spacing:0.565px;left:2px;">Completed</span></div>
<div class="clip" style="left:712px;top:549px;width:116px;height:19px"><span class="t" style="top:1px;font-size:13.3px;line-height:19px;color:#000;letter-spacing:-0.420px;left:58px;transform:translateX(-50%);">122753</span></div>
<span class="t" style="top:569.5px;font-size:13.8px;line-height:19px;color:#217346;font-weight:700;letter-spacing:-0.300px;left:13.4px;transform:translateX(-50%);">19</span>
<div class="clip" style="left:26px;top:569px;width:163px;height:19px"><span class="t" style="top:1px;font-size:13.3px;line-height:19px;color:#000;letter-spacing:0.204px;left:2px;word-spacing:-1px;">Sunny Pal Photography</span></div>
<div class="clip" style="left:190px;top:569px;width:133px;height:19px"><span class="t" style="top:1px;font-size:13.3px;line-height:19px;color:#000;letter-spacing:0.537px;left:66.5px;transform:translateX(-50%);">Delhi</span></div>
<div class="clip" style="left:324px;top:569px;width:171px;height:19px"><span class="t" style="top:1px;font-size:13.3px;line-height:19px;color:#000;letter-spacing:-0.420px;left:2px;">+91 94171 61901</span></div>
<div class="clip" style="left:496px;top:569px;width:215px;height:19px"><span class="t" style="top:1px;font-size:13.3px;line-height:19px;color:#000;letter-spacing:0.565px;left:2px;">Completed</span></div>
<div class="clip" style="left:712px;top:569px;width:116px;height:19px"><span class="t" style="top:1px;font-size:13.3px;line-height:19px;color:#000;letter-spacing:-0.420px;left:58px;transform:translateX(-50%);">122760</span></div>
<span class="t" style="top:589.5px;font-size:12.8px;line-height:19px;color:#555;letter-spacing:-0.100px;left:13.2px;transform:translateX(-50%);">20</span>
<div class="clip" style="left:26px;top:589px;width:163px;height:19px"><span class="t" style="top:1px;font-size:13.3px;line-height:19px;color:#000;letter-spacing:0.325px;left:2px;word-spacing:-1px;">Shutter Blade</span></div>
<div class="clip" style="left:190px;top:589px;width:133px;height:19px"><span class="t" style="top:1px;font-size:13.3px;line-height:19px;color:#000;letter-spacing:0.050px;left:66.5px;transform:translateX(-50%);">Patna</span></div>
<div class="clip" style="left:324px;top:589px;width:171px;height:19px"><span class="t" style="top:1px;font-size:13.3px;line-height:19px;color:#000;letter-spacing:-0.420px;left:2px;">+91 95701 74848</span></div>
<div class="clip" style="left:496px;top:589px;width:215px;height:19px"><span class="t" style="top:1px;font-size:13.3px;line-height:19px;color:#000;letter-spacing:0.284px;left:2px;word-spacing:-1px;">Not Reachabile</span></div>
<div class="clip" style="left:712px;top:589px;width:116px;height:19px"><span class="t" style="top:1px;font-size:13.3px;line-height:19px;color:#000;letter-spacing:-0.420px;left:58px;transform:translateX(-50%);">117298</span></div>
<span class="t" style="top:609.5px;font-size:12.8px;line-height:19px;color:#555;letter-spacing:-0.100px;left:13.2px;transform:translateX(-50%);">21</span>
<div class="clip" style="left:26px;top:609px;width:163px;height:19px"><span class="t" style="top:1px;font-size:13.3px;line-height:19px;color:#000;letter-spacing:0.249px;left:2px;word-spacing:-1px;">Bombay Photography Studio</span></div>
<div class="clip" style="left:190px;top:609px;width:133px;height:19px"><span class="t" style="top:1px;font-size:13.3px;line-height:19px;color:#000;letter-spacing:0.050px;left:66.5px;transform:translateX(-50%);">Patna</span></div>
<div class="clip" style="left:324px;top:609px;width:171px;height:19px"><span class="t" style="top:1px;font-size:13.3px;line-height:19px;color:#000;letter-spacing:-0.420px;left:2px;">+91 77669 03838</span></div>
<div class="clip" style="left:496px;top:609px;width:215px;height:19px"><span class="t" style="top:1px;font-size:13.3px;line-height:19px;color:#000;letter-spacing:0.565px;left:2px;">Completed</span></div>
<div class="clip" style="left:712px;top:609px;width:116px;height:19px"><span class="t" style="top:1px;font-size:13.3px;line-height:19px;color:#000;letter-spacing:-0.420px;left:58px;transform:translateX(-50%);">117335</span></div>
<span class="t" style="top:629.5px;font-size:12.8px;line-height:19px;color:#555;letter-spacing:-0.100px;left:13.2px;transform:translateX(-50%);">22</span>
<div class="clip" style="left:26px;top:629px;width:163px;height:19px"><span class="t" style="top:1px;font-size:13.3px;line-height:19px;color:#000;letter-spacing:0.281px;left:2px;word-spacing:-1px;">Ali Bagwan Photography</span></div>
<div class="clip" style="left:190px;top:629px;width:133px;height:19px"><span class="t" style="top:1px;font-size:13.3px;line-height:19px;color:#000;letter-spacing:0.234px;left:66.5px;transform:translateX(-50%);">Pune</span></div>
<div class="clip" style="left:324px;top:629px;width:171px;height:19px"><span class="t" style="top:1px;font-size:13.3px;line-height:19px;color:#000;letter-spacing:-0.420px;left:2px;">+91 9545850200</span></div>
<div class="clip" style="left:496px;top:629px;width:215px;height:19px"><span class="t" style="top:1px;font-size:13.3px;line-height:19px;color:#000;letter-spacing:0.618px;left:2px;word-spacing:-1px;">Not Answered</span></div>
<div class="clip" style="left:712px;top:629px;width:116px;height:19px"><span class="t" style="top:1px;font-size:13.3px;line-height:19px;color:#000;letter-spacing:-0.420px;left:58px;transform:translateX(-50%);">122662</span></div>
<span class="t" style="top:649.5px;font-size:12.8px;line-height:19px;color:#555;letter-spacing:-0.100px;left:13.2px;transform:translateX(-50%);">23</span>
<div class="clip" style="left:26px;top:649px;width:163px;height:19px"><span class="t" style="top:1px;font-size:13.3px;line-height:19px;color:#000;letter-spacing:0.277px;left:2px;word-spacing:-1px;">Kunal Rajput Photography</span></div>
<div class="clip" style="left:190px;top:649px;width:133px;height:19px"><span class="t" style="top:1px;font-size:13.3px;line-height:19px;color:#000;letter-spacing:0.234px;left:66.5px;transform:translateX(-50%);">Pune</span></div>
<div class="clip" style="left:324px;top:649px;width:171px;height:19px"><span class="t" style="top:1px;font-size:13.3px;line-height:19px;color:#000;letter-spacing:-0.420px;left:2px;">+91 8237774011</span></div>
<div class="clip" style="left:496px;top:649px;width:215px;height:19px"><span class="t" style="top:1px;font-size:13.3px;line-height:19px;color:#000;letter-spacing:0.565px;left:2px;">Completed</span></div>
<div class="clip" style="left:712px;top:649px;width:116px;height:19px"><span class="t" style="top:1px;font-size:13.3px;line-height:19px;color:#000;letter-spacing:-0.420px;left:58px;transform:translateX(-50%);">123015</span></div>
<div class="clip" style="left:0;top:669px;width:25px;height:9px"><span class="t" style="top:0px;font-size:12.8px;line-height:19px;color:#555;letter-spacing:-0.100px;left:13.2px;transform:translateX(-50%);">24</span></div>
<div class="clip" style="left:26px;top:669px;width:163px;height:9px"><span class="t" style="top:1px;font-size:13.3px;line-height:19px;color:#000;letter-spacing:0.144px;left:2px;word-spacing:-1px;">Swapnil Shinde Photography</span></div>
<div class="clip" style="left:190px;top:669px;width:133px;height:9px"><span class="t" style="top:1px;font-size:13.3px;line-height:19px;color:#000;letter-spacing:0.234px;left:66.5px;transform:translateX(-50%);">Pune</span></div>
<div class="clip" style="left:324px;top:669px;width:171px;height:9px"><span class="t" style="top:1px;font-size:13.3px;line-height:19px;color:#000;letter-spacing:-0.420px;left:2px;">+91 9422584060</span></div>
<div class="clip" style="left:496px;top:669px;width:215px;height:9px"><span class="t" style="top:1px;font-size:13.3px;line-height:19px;color:#000;letter-spacing:0.565px;left:2px;">Completed</span></div>
<div class="clip" style="left:712px;top:669px;width:116px;height:9px"><span class="t" style="top:1px;font-size:13.3px;line-height:19px;color:#000;letter-spacing:-0.420px;left:58px;transform:translateX(-50%);">123028</span></div>
<div class="clip" style="left:893px;top:209px;width:180px;height:19px"><span class="t" style="top:1px;font-size:13.3px;line-height:19px;color:#fff;font-weight:700;letter-spacing:-0.210px;left:90px;transform:translateX(-50%);">Summarization</span></div>
<div class="clip" style="left:893px;top:229px;width:116px;height:19px"><span class="t" style="top:1px;font-size:13.3px;line-height:19px;color:#000;letter-spacing:0.565px;left:58px;transform:translateX(-50%);">Completed</span></div>
<div class="clip" style="left:1010px;top:229px;width:63px;height:19px"><span class="t" style="top:1px;font-size:13.3px;line-height:19px;color:#000;letter-spacing:-0.420px;left:31.5px;transform:translateX(-50%);">96</span></div>
<div class="clip" style="left:893px;top:249px;width:116px;height:19px"><span class="t" style="top:1px;font-size:13.3px;line-height:19px;color:#000;letter-spacing:0.284px;left:58px;transform:translateX(-50%);word-spacing:-1px;">Not Reachabile</span></div>
<div class="clip" style="left:1010px;top:249px;width:63px;height:19px"><span class="t" style="top:1px;font-size:13.3px;line-height:19px;color:#000;letter-spacing:-0.420px;left:31.5px;transform:translateX(-50%);">7</span></div>
<div class="clip" style="left:893px;top:269px;width:116px;height:19px"><span class="t" style="top:1px;font-size:13.3px;line-height:19px;color:#000;letter-spacing:0.618px;left:58px;transform:translateX(-50%);word-spacing:-1px;">Not Answered</span></div>
<div class="clip" style="left:1010px;top:269px;width:63px;height:19px"><span class="t" style="top:1px;font-size:13.3px;line-height:19px;color:#000;letter-spacing:-0.420px;left:31.5px;transform:translateX(-50%);">8</span></div>
<div class="clip" style="left:893px;top:289px;width:116px;height:19px"><span class="t" style="top:1px;font-size:13.3px;line-height:19px;color:#000;letter-spacing:0.465px;left:58px;transform:translateX(-50%);word-spacing:-1px;">After Some Time</span></div>
<div class="clip" style="left:1010px;top:289px;width:63px;height:19px"><span class="t" style="top:1px;font-size:13.3px;line-height:19px;color:#000;letter-spacing:-0.420px;left:31.5px;transform:translateX(-50%);">5</span></div>
<div class="clip" style="left:893px;top:309px;width:116px;height:19px"><span class="t" style="top:1px;font-size:13.3px;line-height:19px;color:#000;letter-spacing:0.533px;left:58px;transform:translateX(-50%);word-spacing:-1px;">Invalid Number</span></div>
<div class="clip" style="left:1010px;top:309px;width:63px;height:19px"><span class="t" style="top:1px;font-size:13.3px;line-height:19px;color:#000;letter-spacing:-0.420px;left:31.5px;transform:translateX(-50%);">2</span></div>
<div class="clip" style="left:893px;top:329px;width:116px;height:19px"><span class="t" style="top:1px;font-size:13.3px;line-height:19px;color:#000;letter-spacing:0.473px;left:58px;transform:translateX(-50%);word-spacing:-1px;">Wrong Number</span></div>
<div class="clip" style="left:1010px;top:329px;width:63px;height:19px"><span class="t" style="top:1px;font-size:13.3px;line-height:19px;color:#000;letter-spacing:-0.420px;left:31.5px;transform:translateX(-50%);">4</span></div>
<div class="clip" style="left:893px;top:349px;width:116px;height:19px"><span class="t" style="top:1px;font-size:13.3px;line-height:19px;color:#000;letter-spacing:0.599px;left:58px;transform:translateX(-50%);word-spacing:-1px;">Switch off</span></div>
<div class="clip" style="left:1010px;top:349px;width:63px;height:19px"><span class="t" style="top:1px;font-size:13.3px;line-height:19px;color:#000;letter-spacing:-0.420px;left:31.5px;transform:translateX(-50%);">4</span></div>
<div class="clip" style="left:893px;top:369px;width:116px;height:19px"><span class="t" style="top:1px;font-size:13.3px;line-height:19px;color:#000;letter-spacing:0.181px;left:58px;transform:translateX(-50%);">Refused</span></div>
<div class="clip" style="left:1010px;top:369px;width:63px;height:19px"><span class="t" style="top:1px;font-size:13.3px;line-height:19px;color:#000;letter-spacing:-0.420px;left:31.5px;transform:translateX(-50%);">3</span></div>
<div class="clip" style="left:893px;top:389px;width:116px;height:19px"><span class="t" style="top:1px;font-size:13.3px;line-height:19px;color:#000;letter-spacing:0.261px;left:58px;transform:translateX(-50%);word-spacing:-1px;">E -mail</span></div>
<div class="clip" style="left:1010px;top:389px;width:63px;height:19px"><span class="t" style="top:1px;font-size:13.3px;line-height:19px;color:#000;letter-spacing:-0.420px;left:31.5px;transform:translateX(-50%);">1</span></div>
<div class="a" style="left:1008px;top:567px;width:63px;height:19px;border:2px solid #217346"></div>
<div class="a" style="left:1070px;top:585px;width:7px;height:7px;background:#fff"></div>
<div class="a" style="left:1071px;top:586px;width:5px;height:5px;background:#217346"></div>
<!-- scrollbars + sheet tabs -->
<div class="a" style="left:1348px;top:206px;width:15px;height:458px;background:#f0f0f0"></div>
<div class="a" style="left:1348px;top:191px;width:13px;height:13px;background:#fff;border:1px solid #ababab"></div>
<svg style="left:1352px;top:196px" width="7" height="4" viewBox="0 0 7 4"><path d="M0 4h7L3.5 0z" fill="#777"/></svg>
<div class="a" style="left:1348px;top:206px;width:13px;height:78px;background:#fff;border:1px solid #ababab"></div>
<div class="a" style="left:1348px;top:664px;width:13px;height:13px;background:#fff;border:1px solid #ababab"></div>
<svg style="left:1352px;top:670px" width="7" height="4" viewBox="0 0 7 4"><path d="M0 0h7L3.5 4z" fill="#777"/></svg>
<div class="a" style="left:0;top:679px;width:1366px;height:27px;background:#f3f3f3"></div>
<div class="hl" style="left:0;top:678px;width:1345px;background:#ababab"></div>
<svg style="left:27px;top:687px" width="5" height="8" viewBox="0 0 5 8"><path d="M5 0v8L0 4z" fill="#c6c6c6"/></svg>
<svg style="left:55px;top:687px" width="5" height="8" viewBox="0 0 5 8"><path d="M0 0v8L5 4z" fill="#c6c6c6"/></svg>
<div class="a" style="left:100px;top:678px;width:114px;height:23px;background:#fff;border-left:1px solid #ababab;border-right:1px solid #ababab"></div>
<div class="a" style="left:100px;top:701px;width:116px;height:2px;background:#217346"></div>
<span class="t" style="top:683.25px;font-size:12.5px;line-height:16.5px;color:#217346;font-weight:700;letter-spacing:0.161px;left:112px;">Photographers</span>
<span class="t" style="top:683.25px;font-size:12.5px;line-height:16.5px;color:#444;letter-spacing:0.386px;left:228px;">Decorators</span>
<div class="vl" style="left:306px;top:683px;height:17px;background:#ababab"></div>
<span class="t" style="top:683.25px;font-size:12.5px;line-height:16.5px;color:#444;letter-spacing:-0.271px;left:319px;">Sheet3</span>
<div class="vl" style="left:370px;top:683px;height:17px;background:#ababab"></div>
<svg style="left:403.5px;top:683px" width="17" height="17" viewBox="0 0 17 17"><circle cx="8.5" cy="8.5" r="7.5" fill="none" stroke="#6a6a6a" stroke-width="1.2"/><path d="M8.5 4.500v8M4.500 8.500h8" stroke="#5e5e5e" stroke-width="1.500"/></svg>
<div class="a" style="left:819px;top:687px;width:2px;height:2px;background:#aaa"></div><div class="a" style="left:819px;top:691px;width:2px;height:2px;background:#aaa"></div><div class="a" style="left:819px;top:695px;width:2px;height:2px;background:#aaa"></div>
<div class="a" style="left:851px;top:685px;width:479px;height:15px;background:#e8e8e8"></div>
<div class="a" style="left:836px;top:685px;width:13px;height:13px;background:#fff;border:1px solid #ababab"></div>
<svg style="left:841px;top:689px" width="4" height="7" viewBox="0 0 4 7"><path d="M4 0v7L0 3.5z" fill="#666"/></svg>
<div class="a" style="left:851px;top:685px;width:437px;height:13px;background:#fff;border:1px solid #ababab"></div>
<div class="a" style="left:1330px;top:685px;width:13px;height:13px;background:#fff;border:1px solid #ababab"></div>
<svg style="left:1336px;top:689px" width="4" height="7" viewBox="0 0 4 7"><path d="M0 0v7L4 3.5z" fill="#666"/></svg>
</body></html>
